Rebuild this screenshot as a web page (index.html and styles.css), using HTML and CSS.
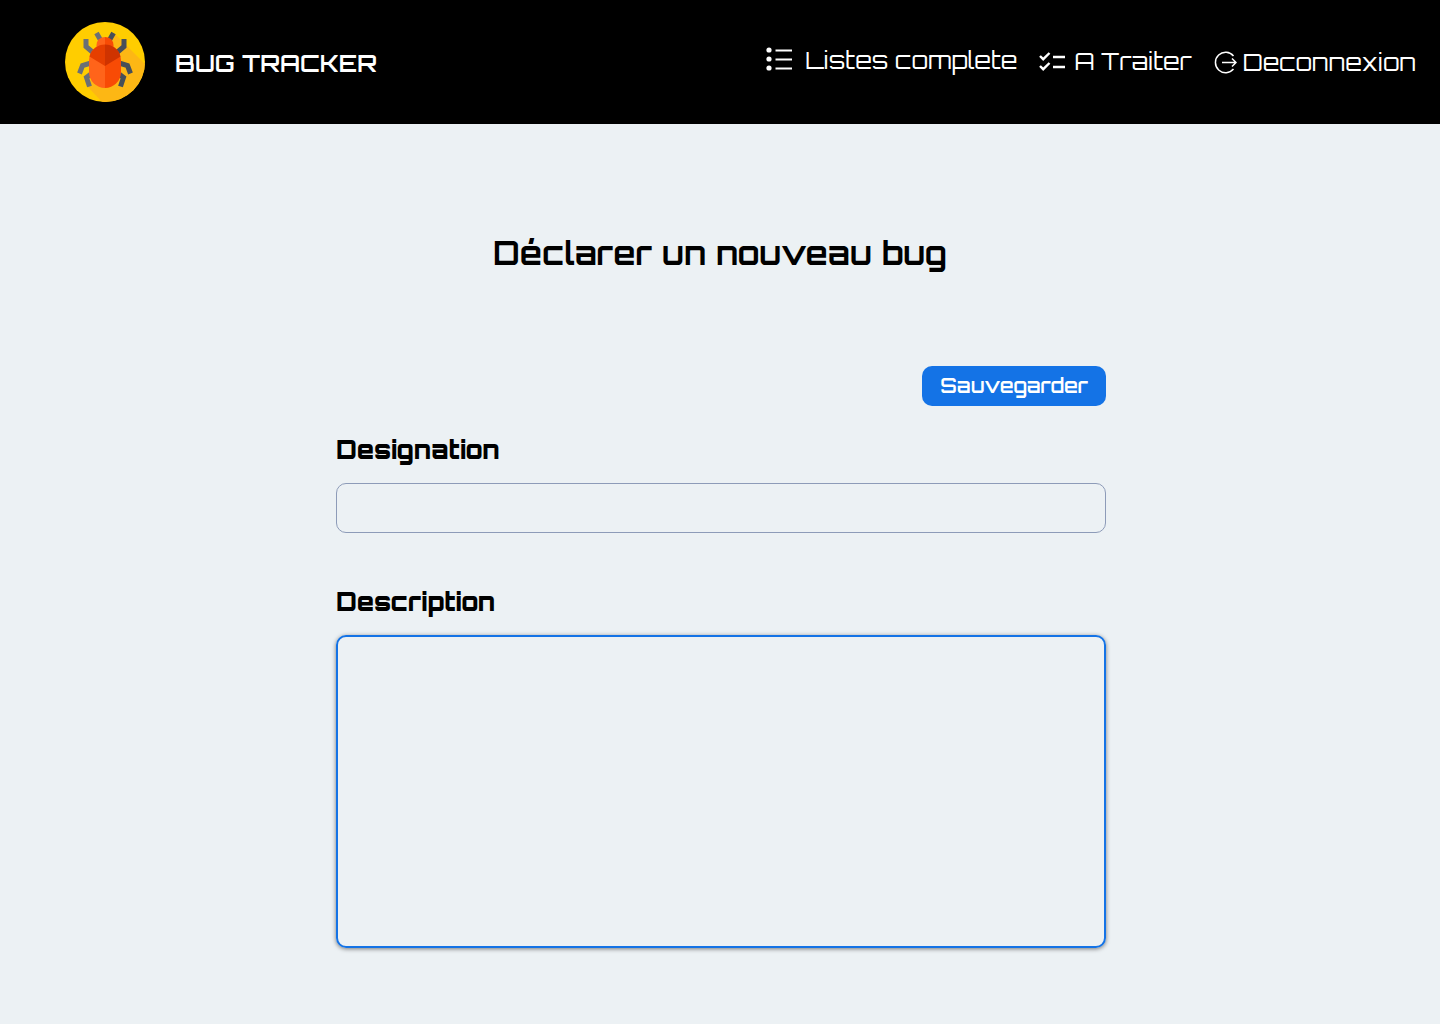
FILE: index.html
```html
<!DOCTYPE html>
<html lang="fr">
<head>
  <meta charset="utf-8">
  <meta name="viewport" content="width=device-width, initial-scale=1">
  <title>Bug Tracker</title>
  <link rel="stylesheet" href="styles.css">
</head>
<body>
  <header class="topbar">
    <a class="brand" href="#">
      <svg class="brand-logo" viewBox="0 0 80 80" aria-hidden="true">
        <defs><clipPath id="disc"><circle cx="40" cy="40" r="40"/></clipPath></defs>
        <circle cx="40" cy="40" r="40" fill="#ffcd00"/>
        <path d="M49 11 L80 42 V80 H37 L22 64 L40 40Z" fill="#fdb714" clip-path="url(#disc)"/>
        <g fill="none" stroke-width="5">
          <path d="M31.500 11l4 7M21 17v7.500l7 6M26 41l-8.500 2.500-3 8M26 52l-4.500 3.500 3 9" stroke="#6b6f76"/>
          <path d="M48.500 11l-4 7M59 17v7.500l-7 6M54 41l8.500 2.500 3 8M54 52l4.500 3.500-3 9" stroke="#474f59"/>
        </g>
        <path d="M31.500 30v-7a8.500 8 0 0 1 8.500-8v15z" fill="#ff641a"/>
        <path d="M48.500 30v-7a8.500 8 0 0 0-8.500-8v15z" fill="#f84b05"/>
        <path d="M40 22.500a16 16 0 0 0-16 16v11.500a16 16 0 0 0 16 16z" fill="#ff641a"/>
        <path d="M40 22.500a16 16 0 0 1 16 16v11.500a16 16 0 0 1-16 16z" fill="#f84b05"/>
        <path d="M40 22.500a16 16 0 0 0-15.500 12L40 44z" fill="#e63f00"/>
        <path d="M40 22.500a16 16 0 0 1 15.500 12L40 44z" fill="#cf3300"/>
      </svg>
      <span class="brand-name">BUG TRACKER</span>
    </a>
    <nav class="menu">
      <a class="menu-link menu-link-list" href="#">
        <svg class="icon-list" viewBox="0 0 28 28" aria-hidden="true">
          <g fill="#fff"><circle cx="4" cy="4" r="2.600"/><circle cx="4" cy="13" r="2.600"/><circle cx="4" cy="22" r="2.600"/></g>
          <path d="M10.500 4.500H27M10.500 13.500H27M10.500 22.500H27" stroke="#fff" stroke-width="2"/>
        </svg>
        <span>Listes complete</span>
      </a>
      <a class="menu-link menu-link-todo" href="#">
        <svg class="icon-list" viewBox="0 0 28 28" aria-hidden="true">
          <path d="M2 9l3.200 3.200L11.500 6M2 19l3.200 3.200L11.500 16" fill="none" stroke="#fff" stroke-width="2.400"/>
          <path d="M15 10H27M15 20H27" stroke="#fff" stroke-width="2.400"/>
        </svg>
        <span>A Traiter</span>
      </a>
      <a class="menu-link menu-link-exit" href="#">
        <svg class="icon-exit" viewBox="0 0 24 24" aria-hidden="true">
          <path d="M20.500 6A10.200 10.200 0 1 0 20.500 19M9 12.500H23M19 8.500l4 4-4 4" fill="none" stroke="#fff" stroke-width="1.500"/>
        </svg>
        <span>Deconnexion</span>
      </a>
    </nav>
  </header>

  <main class="page">
    <h1 class="page-title">Déclarer un nouveau bug</h1>
    <form class="bug-form">
      <button class="save-button" type="button">Sauvegarder</button>
      <label class="field-label" for="designation">Designation</label>
      <input class="field field-line" type="text" id="designation" name="designation">
      <label class="field-label" for="description">Description</label>
      <textarea class="field field-area" id="description" name="description"></textarea>
    </form>
  </main>
</body>
</html>
```
FILE: styles.css
```css
* {
  box-sizing: border-box;
}

body {
  margin: 0;
  background: #ecf1f4;
  color: #000;
  font-family: Orbitron, "DejaVu Sans", sans-serif;
}

.topbar {
  display: flex;
  align-items: center;
  justify-content: space-between;
  padding: 22px 24px 22px 65px;
  background: #000;
}

.brand,
.menu,
.menu-link {
  display: flex;
  align-items: center;
  color: #fff;
  text-decoration: none;
  white-space: nowrap;
}

.brand {
  gap: 30px;
}

.brand-logo {
  width: 80px;
  height: 80px;
}

.brand-name {
  padding-top: 2px;
  font-size: 24px;
  font-weight: 600;
  line-height: 32px;
}

.menu {
  gap: 21px;
}

.menu-link {
  gap: 8px;
  padding-bottom: 2px;
  font-size: 24px;
  font-weight: 400;
  line-height: 32px;
}

.menu-link-list {
  gap: 12px;
  padding-bottom: 4px;
}

.menu-link-exit {
  gap: 6px;
  padding-bottom: 0;
}

.icon-list {
  width: 28px;
  height: 28px;
}

.icon-exit {
  width: 24px;
  height: 24px;
}

.page {
  padding: 105px 24px 76px;
}

.page-title {
  margin: 0 0 89px;
  font-size: 32px;
  font-weight: 700;
  line-height: 48px;
  text-align: center;
}

.bug-form {
  display: flex;
  flex-direction: column;
  max-width: 772px;
  margin: 0 auto;
  padding-left: 2px;
}

.save-button {
  align-self: flex-end;
  height: 40px;
  margin-bottom: 28px;
  padding: 0 18px 2px;
  border: 0;
  border-radius: 10px;
  background: #1473e6;
  color: #fff;
  font-family: inherit;
  font-size: 20px;
  font-weight: 600;
}

.field-label {
  margin-bottom: 17px;
  font-size: 25px;
  font-weight: 900;
  line-height: 32px;
}

.field {
  width: 100%;
  padding: 10px 16px;
  border: 1px solid #8d9bb8;
  border-radius: 10px;
  background: transparent;
  font-family: inherit;
  font-size: 20px;
  outline: none;
}

.field-line {
  height: 50px;
  margin-bottom: 53px;
}

.field-area {
  height: 313px;
  border: 2px solid #1473e6;
  box-shadow: 0 1px 4px #00000080;
  resize: none;
}
```
